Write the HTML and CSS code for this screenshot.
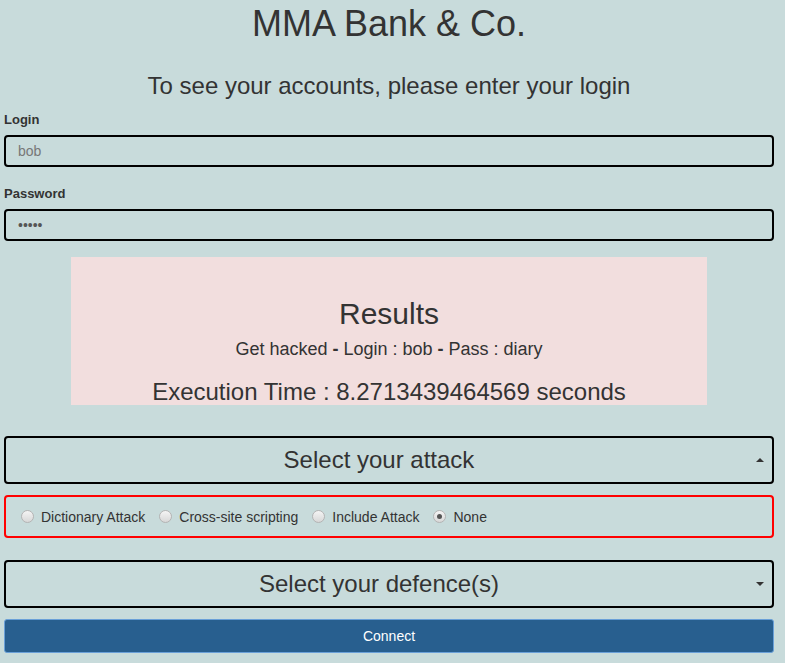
FILE: index.html
```html
<!DOCTYPE html>
<html>
<head>
<meta charset="utf-8">
<title>MMA Bank & Co.</title>
<link rel="stylesheet" href="styles.css">
</head>
<body>
<div class="page">
  <h1 class="title">MMA Bank &amp; Co.</h1>
  <h2 class="subtitle">To see your accounts, please enter your login</h2>
  <div class="field">
    <label class="label">Login</label>
    <div class="input placeholder">bob</div>
  </div>
  <div class="field">
    <label class="label">Password</label>
    <div class="input password">•••••</div>
  </div>
  <div class="results">
    <div class="results-title">Results</div>
    <div class="results-line">Get hacked <b>-</b> Login : bob <b>-</b> Pass : diary</div>
    <div class="results-time">Execution Time : 8.2713439464569 seconds</div>
  </div>
  <div class="select">
    <span>Select your attack</span>
    <span class="caret up"></span>
  </div>
  <div class="radios">
    <label class="radio"><span class="dot"></span>Dictionary Attack</label>
    <label class="radio"><span class="dot"></span>Cross-site scripting</label>
    <label class="radio"><span class="dot"></span>Include Attack</label>
    <label class="radio"><span class="dot checked"></span>None</label>
  </div>
  <div class="select select-def">
    <span>Select your defence(s)</span>
    <span class="caret down"></span>
  </div>
  <div class="button">Connect</div>
</div>
</body>
</html>
```

FILE: styles.css
```css
html, body {
  margin: 0;
  padding: 0;
  background: #c8dbdb;
}
body {
  font-family: "Liberation Sans", Arial, sans-serif;
  color: #333;
}
.page {
  width: 770px;
  margin-left: 4px;
  display: flex;
  flex-direction: column;
}
.title {
  margin: 4px 0 0;
  font-size: 36px;
  line-height: 40px;
  font-weight: normal;
  text-align: center;
}
.subtitle {
  margin: 27px 0 0;
  font-size: 24px;
  line-height: 30px;
  font-weight: normal;
  text-align: center;
}
.field {
  display: flex;
  flex-direction: column;
}
.field:first-of-type { margin-top: 10px; }
.field + .field { margin-top: 18px; }
.label {
  font-size: 13px;
  font-weight: bold;
  line-height: 18px;
  margin-bottom: 6px;
}
.input {
  height: 28px;
  border: 2px solid #000;
  border-radius: 4px;
  padding: 0 12px;
  font-size: 14px;
  line-height: 28px;
  color: #777;
}
.input.password {
  font-size: 14px;
  color: #555;
}
.results {
  align-self: center;
  width: 636px;
  height: 148px;
  margin-top: 16px;
  background: #f2dede;
  text-align: center;
  display: flex;
  flex-direction: column;
  align-items: center;
}
.results-title {
  margin-top: 40px;
  font-size: 30px;
  line-height: 34px;
  flex-shrink: 0;
}
.results-line {
  margin-top: 8px;
  font-size: 18px;
  line-height: 20px;
  flex-shrink: 0;
}
.results-line b { font-weight: bold; }
.results-time {
  margin-top: 19px;
  font-size: 24px;
  line-height: 28px;
  flex-shrink: 0;
}
.select {
  position: relative;
  height: 44px;
  margin-top: 31px;
  padding-right: 20px;
  border: 2px solid #000;
  border-radius: 4px;
  display: flex;
  align-items: center;
  justify-content: center;
  font-size: 24px;
}
.select-def { margin-top: 22px; }
.caret {
  position: absolute;
  right: 8px;
  top: 50%;
  width: 0;
  height: 0;
  border-left: 4px solid transparent;
  border-right: 4px solid transparent;
}
.caret.up {
  border-bottom: 4px solid #333;
  margin-top: -2px;
}
.caret.down {
  border-top: 4px solid #333;
  margin-top: -2px;
}
.radios {
  height: 39px;
  margin-top: 11px;
  border: 2px solid #f00;
  border-radius: 4px;
  display: flex;
  align-items: center;
  padding-left: 15px;
  gap: 14px;
  font-size: 14px;
  color: #333;
}
.radio {
  display: flex;
  align-items: center;
}
.dot {
  position: relative;
  width: 11px;
  height: 11px;
  border: 1px solid #b4b4b4;
  border-radius: 50%;
  background: linear-gradient(#f4f4f4, #d8d8d8);
  margin-right: 7px;
}
.dot.checked::after {
  content: "";
  position: absolute;
  left: 3px;
  top: 3px;
  width: 5px;
  height: 5px;
  border-radius: 50%;
  background: #555;
}
.button {
  margin-top: 11px;
  height: 32px;
  border: 1px solid #6aa0d8;
  border-radius: 3px;
  background: #285f8f;
  color: #fff;
  font-size: 14px;
  line-height: 32px;
  text-align: center;
}
```
